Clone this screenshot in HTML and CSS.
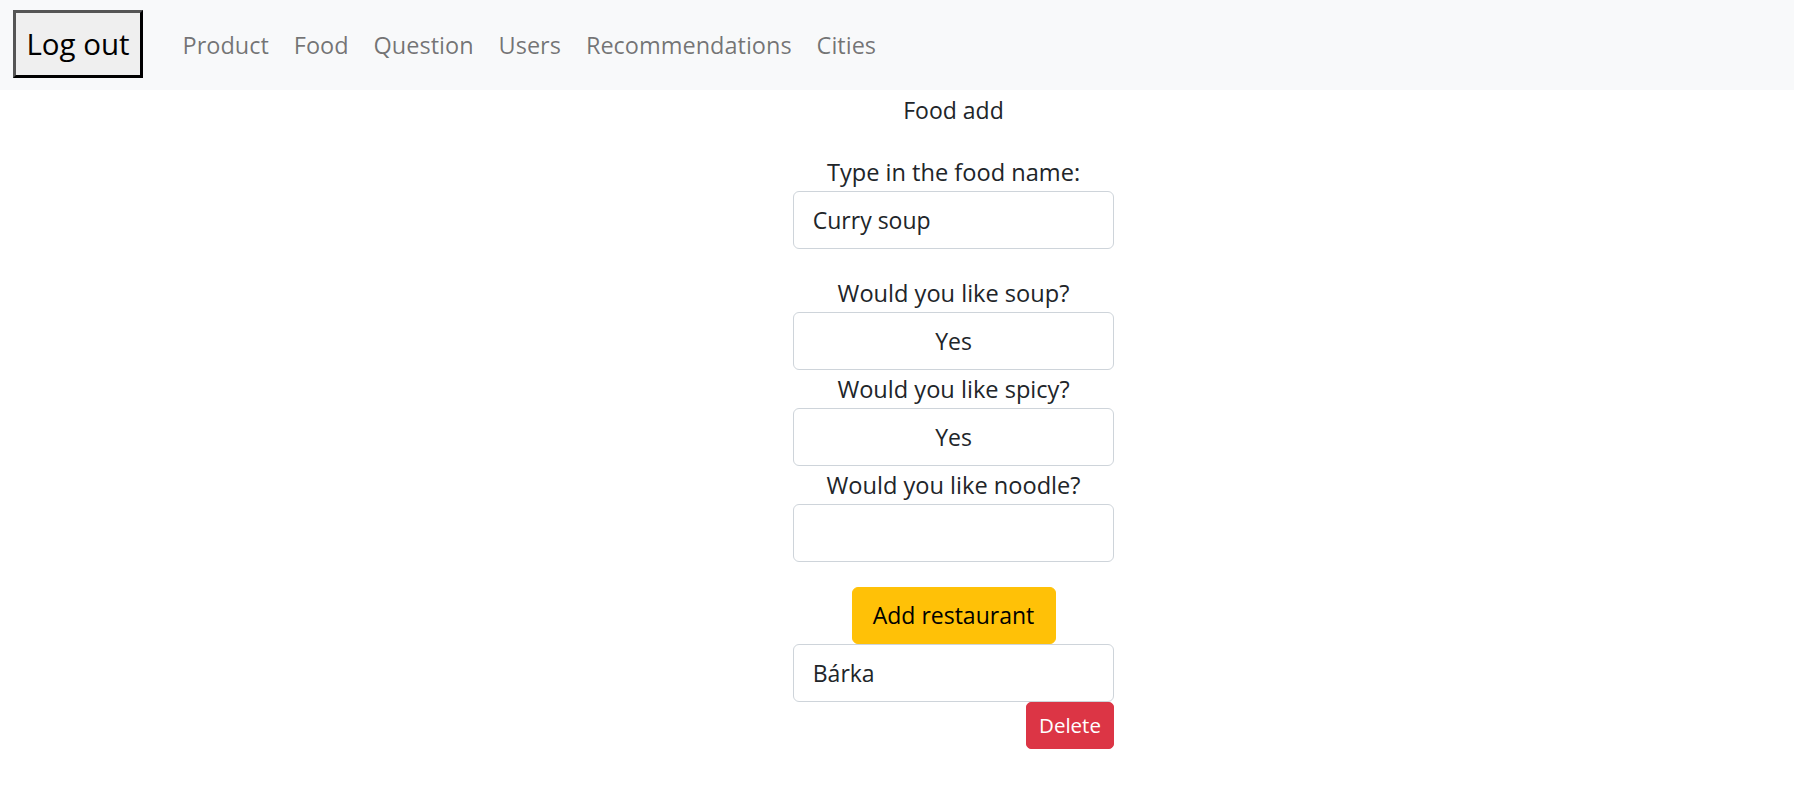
FILE: index.html
```html
<!DOCTYPE html>
<html lang="en">
<head>
<meta charset="utf-8">
<title>Food add</title>
<link rel="stylesheet" href="styles.css">
</head>
<body>
<nav class="navbar">
  <button class="logout">Log out</button>
  <ul class="nav">
    <li><a class="nav-link" href="#">Product</a></li>
    <li><a class="nav-link" href="#">Food</a></li>
    <li><a class="nav-link" href="#">Question</a></li>
    <li><a class="nav-link" href="#">Users</a></li>
    <li><a class="nav-link" href="#">Recommendations</a></li>
    <li><a class="nav-link" href="#">Cities</a></li>
  </ul>
</nav>
<main class="page">
  <div class="form">
    <div class="title">Food add</div>
    <label class="label first">Type in the food name:</label>
    <input class="form-control" type="text" value="Curry soup">
    <label class="label spaced">Would you like soup?</label>
    <input class="form-control centered" type="text" value="Yes">
    <label class="label">Would you like spicy?</label>
    <input class="form-control centered" type="text" value="Yes">
    <label class="label">Would you like noodle?</label>
    <input class="form-control centered" type="text" value="">
    <button class="btn btn-warning">Add restaurant</button>
    <input class="form-control" type="text" value="Bárka">
    <div class="row-end">
      <button class="btn btn-danger btn-sm">Delete</button>
    </div>
  </div>
</main>
</body>
</html>
```

FILE: styles.css
```css
* { box-sizing: border-box; }

html, body {
  margin: 0;
  padding: 0;
  background: #fff;
}

body {
  font-family: "Open Sans", "Noto Sans", "Liberation Sans", sans-serif;
  font-size: 23px;
  line-height: 37.5px;
  color: #212529;
}

.navbar {
  height: 90px;
  background: #f8f9fa;
  display: flex;
  align-items: center;
  padding-left: 13px;
}

.logout {
  font-family: inherit;
  font-size: 29.5px;
  line-height: 40px;
  color: #000;
  background: #efefef;
  width: 130px;
  height: 68px;
  padding: 0;
  margin-top: -2px;
  border: 3px solid;
  border-color: #555 #000 #000 #555;
  border-radius: 0;
}

.nav {
  list-style: none;
  margin: 0 0 0 27px;
  padding: 0;
  display: flex;
}

.nav-link {
  display: block;
  padding: 2px 12.5px 0;
  color: rgba(0, 0, 0, 0.55);
  text-decoration: none;
  font-size: 23.5px;
  line-height: 37.5px;
}

.page {
  display: flex;
  justify-content: center;
  padding-left: 113px;
}

.form {
  width: 321px;
  display: flex;
  flex-direction: column;
  align-items: center;
}

.title {
  line-height: 37.5px;
  padding-top: 2px;
}

.label {
  display: block;
  line-height: 38.5px;
  text-align: center;
  font-size: 23.6px;
}

.label.first {
  margin-top: 23px;
}

.label.spaced {
  margin-top: 25px;
}

.form-control {
  display: block;
  width: 321px;
  height: 57.5px;
  padding: 0 18.75px;
  font-family: inherit;
  font-size: 23px;
  color: #212529;
  background: #fff;
  border: 1px solid #ced4da;
  border-radius: 6px;
  outline: none;
}

.form-control.centered {
  text-align: center;
}

.btn {
  font-family: inherit;
  border: 1px solid transparent;
  cursor: pointer;
}

.btn-warning {
  margin-top: 25px;
  width: 204px;
  height: 57.5px;
  font-size: 23px;
  color: #000;
  background: #ffc107;
  border-color: #ffc107;
  border-radius: 6px;
  padding: 0;
}

.row-end {
  width: 321px;
  display: flex;
  justify-content: flex-end;
}

.btn-sm {
  width: 88px;
  height: 47.5px;
  padding: 0;
  font-size: 20.5px;
  border-radius: 5px;
}

.btn-danger {
  color: #fff;
  background: #dc3545;
  border-color: #dc3545;
}
```
